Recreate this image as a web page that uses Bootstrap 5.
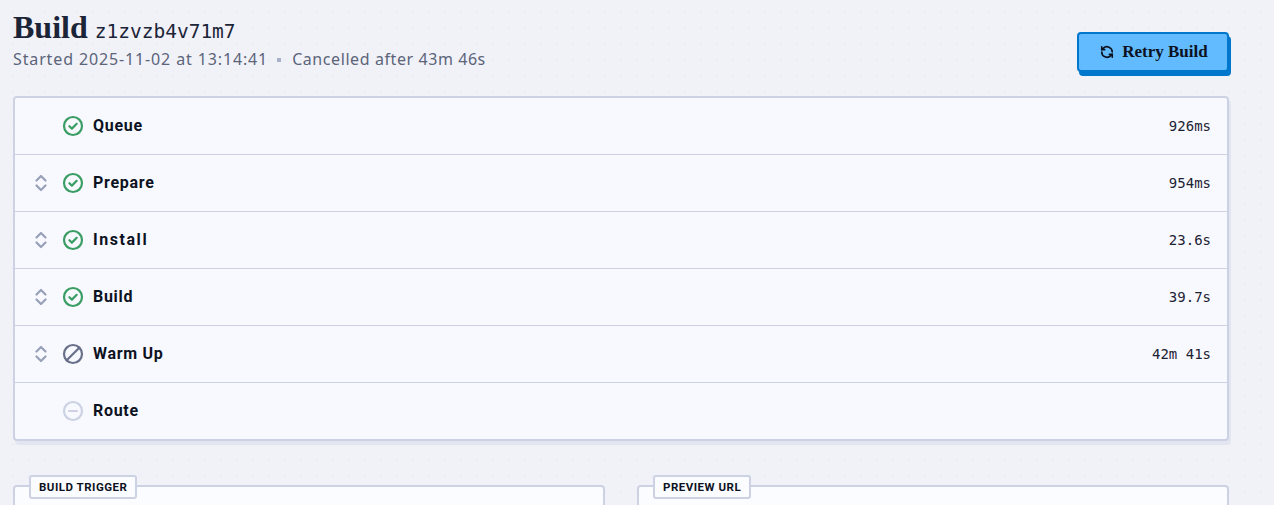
<!DOCTYPE html>
<html lang="en">
<head>
<meta charset="utf-8">
<title>Build z1zvzb4v71m7</title>
<link href="https://cdn.jsdelivr.net/npm/bootstrap@5.3.0/dist/css/bootstrap.min.css" rel="stylesheet">
<style>
html,body{height:505px;overflow:hidden}
body{background-color:#f1f2f8;background-image:radial-gradient(circle,#ebedf4 1px,transparent 1.2px);background-size:16px 16px;background-position:5px 4px;font-family:"Noto Sans",sans-serif;color:#1c2233}
.page-wrap{padding:8px 45px 0 13px;height:505px;overflow:hidden}
.head-bar{height:88px}
.build-title{font-family:"Liberation Serif",serif;font-weight:700;font-size:32px;line-height:38px;height:38px;margin:0;color:#1c2438}
.build-id{font-family:"DejaVu Sans Mono",monospace;font-weight:400;font-size:19.5px;line-height:1;margin-left:-1px}
.build-meta{font-size:16px;line-height:20px;color:#5b6478;margin-top:3px;letter-spacing:.87px}
.meta-after{letter-spacing:.58px}
.meta-dot{display:inline-block;width:4px;height:4px;background:#a9b1c6;margin:0 11px 1px 9px;vertical-align:middle}
.retry-btn{width:152px;height:40px;margin-top:24px;background:#62bbff;border:2px solid #0077cc;border-radius:4px;box-shadow:2px 4px 0 #0077cc;font-family:"Liberation Serif",serif;font-weight:700;font-size:17px;color:#0c1220;padding:0 0 0 2px}
.retry-btn:hover{background:#62bbff;border-color:#0077cc;color:#0c1220}
.steps-box{background:#f8f9fe;border:2px solid #ccd2e3;border-radius:4px;box-shadow:2px 4px 0 #e3e6f1}
.step-row{height:57px;border-bottom:1px solid #ccd2e3;padding:0 16px 0 19px}
.step-row:last-child{border-bottom:0;height:56px}
.chev-slot{width:20px;flex:none}
.state-slot{width:22px;margin-left:8px;margin-right:9px;flex:none}
.step-name{font-family:"Roboto",sans-serif;font-weight:700;font-size:16px;letter-spacing:.7px;color:#0d1222}
.step-name-wide{letter-spacing:1.55px}
.step-time{font-family:"DejaVu Sans Mono",monospace;font-size:14px;color:#1c2233}
.panel-row{margin-top:44px;gap:32px}
.info-panel{position:relative;flex:1 1 0;height:60px;background:#fbfcff;border:2px solid #ccd2e3;border-radius:4px}
.info-tag{position:absolute;top:-12px;left:14px;height:24px;background:#fbfcff;border:2px solid #ccd2e3;border-radius:3px;padding:0 8px;font-family:"Roboto",sans-serif;font-weight:700;font-size:11.5px;line-height:20px;letter-spacing:.5px;color:#0d1222;white-space:nowrap}
svg{display:block}
</style>
</head>
<body>
<div class="page-wrap">
  <div class="head-bar d-flex justify-content-between align-items-start">
    <div>
      <h1 class="build-title">Build <span class="build-id">z1zvzb4v71m7</span></h1>
      <div class="build-meta">Started 2025-11-02 at 13:14:41<span class="meta-dot"></span><span class="meta-after">Cancelled after 43m 46s</span></div>
    </div>
    <button type="button" class="btn retry-btn d-flex align-items-center justify-content-center gap-2">
      <svg width="14" height="14" viewBox="0 0 24 24" fill="none" stroke="#0c1220" stroke-width="2.8" stroke-linecap="round" stroke-linejoin="round"><path d="M21 12a9 9 0 0 0-15.5-6.2L3 8"/><path d="M3 3v5h5"/><path d="M3 12a9 9 0 0 0 15.5 6.2L21 16"/><path d="M21 21v-5h-5"/></svg>
      Retry Build
    </button>
  </div>

  <div class="steps-box">
    <div class="step-row d-flex align-items-center">
      <div class="chev-slot"></div>
      <div class="state-slot"><svg width="22" height="22" viewBox="0 0 22 22" fill="none" stroke="#3a9d63" stroke-width="2.2" stroke-linecap="round" stroke-linejoin="round"><circle cx="11" cy="11" r="9"/><path d="M7.4 11.200l2.500 2.400 4.800-4.800"/></svg></div>
      <span class="step-name">Queue</span>
      <span class="step-time ms-auto">926ms</span>
    </div>
    <div class="step-row d-flex align-items-center">
      <div class="chev-slot"><svg width="14" height="20" viewBox="0 0 14 20" fill="none" stroke="#97a0b8" stroke-width="2.2" stroke-linecap="round" stroke-linejoin="round"><path d="M2.500 7.500L7 3l4.500 4.500"/><path d="M2.500 12.500L7 17l4.500-4.500"/></svg></div>
      <div class="state-slot"><svg width="22" height="22" viewBox="0 0 22 22" fill="none" stroke="#3a9d63" stroke-width="2.2" stroke-linecap="round" stroke-linejoin="round"><circle cx="11" cy="11" r="9"/><path d="M7.4 11.200l2.500 2.400 4.800-4.800"/></svg></div>
      <span class="step-name">Prepare</span>
      <span class="step-time ms-auto">954ms</span>
    </div>
    <div class="step-row d-flex align-items-center">
      <div class="chev-slot"><svg width="14" height="20" viewBox="0 0 14 20" fill="none" stroke="#97a0b8" stroke-width="2.2" stroke-linecap="round" stroke-linejoin="round"><path d="M2.500 7.500L7 3l4.500 4.500"/><path d="M2.500 12.500L7 17l4.500-4.500"/></svg></div>
      <div class="state-slot"><svg width="22" height="22" viewBox="0 0 22 22" fill="none" stroke="#3a9d63" stroke-width="2.2" stroke-linecap="round" stroke-linejoin="round"><circle cx="11" cy="11" r="9"/><path d="M7.4 11.200l2.500 2.400 4.800-4.800"/></svg></div>
      <span class="step-name step-name-wide">Install</span>
      <span class="step-time ms-auto">23.6s</span>
    </div>
    <div class="step-row d-flex align-items-center">
      <div class="chev-slot"><svg width="14" height="20" viewBox="0 0 14 20" fill="none" stroke="#97a0b8" stroke-width="2.2" stroke-linecap="round" stroke-linejoin="round"><path d="M2.500 7.500L7 3l4.500 4.500"/><path d="M2.500 12.500L7 17l4.500-4.500"/></svg></div>
      <div class="state-slot"><svg width="22" height="22" viewBox="0 0 22 22" fill="none" stroke="#3a9d63" stroke-width="2.2" stroke-linecap="round" stroke-linejoin="round"><circle cx="11" cy="11" r="9"/><path d="M7.4 11.200l2.500 2.400 4.800-4.800"/></svg></div>
      <span class="step-name">Build</span>
      <span class="step-time ms-auto">39.7s</span>
    </div>
    <div class="step-row d-flex align-items-center">
      <div class="chev-slot"><svg width="14" height="20" viewBox="0 0 14 20" fill="none" stroke="#97a0b8" stroke-width="2.2" stroke-linecap="round" stroke-linejoin="round"><path d="M2.500 7.500L7 3l4.500 4.500"/><path d="M2.500 12.500L7 17l4.500-4.500"/></svg></div>
      <div class="state-slot"><svg width="22" height="22" viewBox="0 0 22 22" fill="none" stroke="#69708a" stroke-width="2.2" stroke-linecap="round"><circle cx="11" cy="11" r="9"/><path d="M17.300 4.700L4.700 17.300"/></svg></div>
      <span class="step-name">Warm Up</span>
      <span class="step-time ms-auto">42m 41s</span>
    </div>
    <div class="step-row d-flex align-items-center">
      <div class="chev-slot"></div>
      <div class="state-slot"><svg width="22" height="22" viewBox="0 0 22 22" fill="none" stroke="#ccd2e3" stroke-width="2.2" stroke-linecap="round"><circle cx="11" cy="11" r="9"/><path d="M7 11h8"/></svg></div>
      <span class="step-name">Route</span>
    </div>
  </div>

  <div class="panel-row d-flex">
    <div class="info-panel"><span class="info-tag">BUILD TRIGGER</span></div>
    <div class="info-panel"><span class="info-tag">PREVIEW URL</span></div>
  </div>
</div>
</body>
</html>
